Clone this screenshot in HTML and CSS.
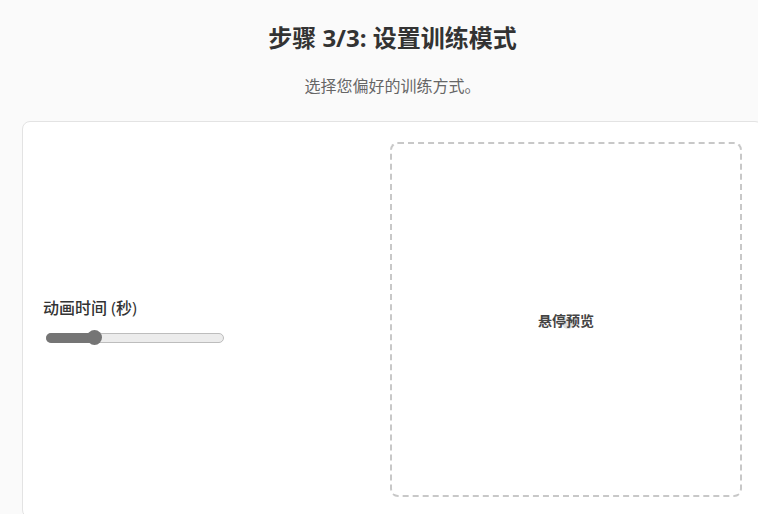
FILE: index.html
```html
<!DOCTYPE html>
<html lang="zh">
<head>
<meta charset="utf-8">
<link rel="stylesheet" href="styles.css">
</head>
<body>
<div class="page">
  <h1 class="title">步骤 3/3: 设置训练模式</h1>
  <p class="subtitle">选择您偏好的训练方式。</p>
  <div class="card">
    <div class="controls">
      <label class="label">动画时间 (秒)</label>
      <div class="slider">
        <div class="fill" style="width:50px"></div>
        <div class="thumb" style="left:43px"></div>
      </div>
    </div>
    <div class="preview">
      <span class="dot"></span>
      <span class="preview-text">悬停预览</span>
    </div>
  </div>
</div>
</body>
</html>
```
FILE: styles.css
```css
html, body {
  margin: 0;
  padding: 0;
  background: #fafafa;
  font-family: "Open Sans", "Noto Sans CJK SC", sans-serif;
  color: #333;
}
.page {
  width: 741px;
  margin-left: 22px;
  padding-top: 18px;
}
.title {
  margin: 0;
  text-align: center;
  font-size: 24px;
  font-weight: 700;
  line-height: 40px;
  color: #333;
}
.subtitle {
  margin: 17px 0 0;
  text-align: center;
  font-size: 16px;
  line-height: 22px;
  color: #666;
}
.card {
  margin-top: 24px;
  background: #fff;
  border: 1px solid #e3e3e3;
  border-radius: 8px;
  padding: 20px;
  display: grid;
  grid-template-columns: 1fr 352px;
  gap: 20px;
}
.controls {
  display: flex;
  flex-direction: column;
  justify-content: center;
}
.label {
  font-size: 16px;
  font-weight: 500;
  line-height: 22px;
  color: #333;
}
.slider {
  position: relative;
  margin-top: 14px;
  margin-left: 3px;
  width: 176px;
  height: 8px;
  border: 1px solid #bdbdbd;
  border-radius: 5px;
  background: #ececec;
}
.fill {
  position: absolute;
  left: -1px;
  top: -1px;
  height: 10px;
  background: #757575;
  border-radius: 5px 0 0 5px;
}
.thumb {
  position: absolute;
  top: -4px;
  width: 15px;
  height: 15px;
  margin-left: -3px;
  border-radius: 50%;
  background: #757575;
}
.preview {
  position: relative;
  height: 351px;
  border: 2px dashed #c8c8c8;
  border-radius: 8px;
  display: flex;
  align-items: center;
  justify-content: center;
}
.dot {
  position: absolute;
  left: 50%;
  top: 50%;
  width: 12px;
  height: 12px;
  margin: -3px 0 0 -4px;
  border-radius: 50%;
  background: #dedede;
}
.preview-text {
  position: relative;
  font-size: 14px;
  font-weight: 700;
  color: #444;
}
```
